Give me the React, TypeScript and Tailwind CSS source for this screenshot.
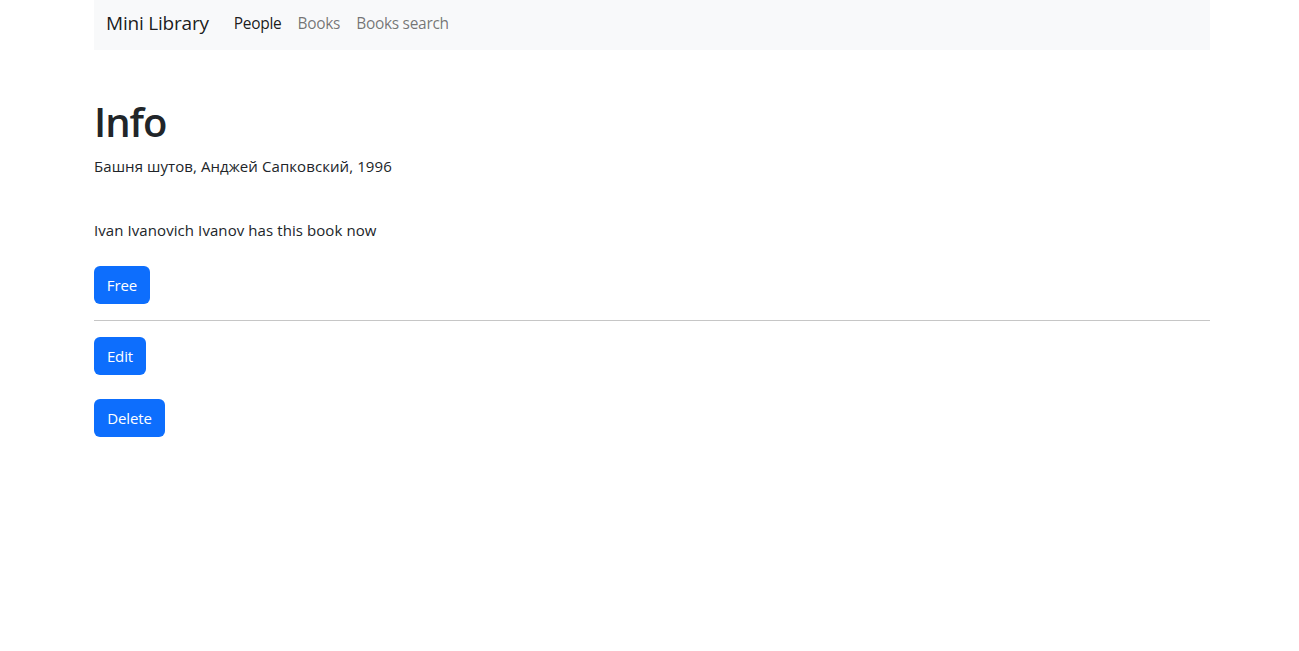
import React from "react";

export default function App() {
  return (
    <div className="min-h-[651px] bg-white text-[#212529] font-['Open_Sans',sans-serif] text-[16px] leading-[24px]">
      <div className="ml-[94px] w-[1116px]">
        <nav className="h-[50px] bg-[#f8f9fa] flex items-center px-[12px] pb-[5px]">
          <span className="text-[19px] leading-[30px] text-black/90 mr-[17px] whitespace-nowrap tracking-[-0.2px]">Mini Library</span>
          <a className="px-[8px] text-[15.5px] text-black/90 whitespace-nowrap tracking-[-0.3px]">People</a>
          <a className="px-[8px] text-[15.5px] text-black/55 whitespace-nowrap tracking-[-0.3px]">Books</a>
          <a className="px-[8px] text-[15.5px] text-black/55 whitespace-nowrap tracking-[-0.3px]">Books search</a>
        </nav>
        <main className="pt-[48px]">
          <h1 className="text-[40px] leading-[48px] font-semibold mb-[8px] tracking-[-1px]">Info</h1>
          <p className="text-[15px] tracking-[0.08px]">Башня шутов, Анджей Сапковский, 1996</p>
          <p className="mt-[40px] text-[15px] tracking-[0.08px]">Ivan Ivanovich Ivanov has this book now</p>
          <div className="mt-[24px] flex flex-col items-start">
            <button className="h-[38px] w-[56px] rounded-[6px] bg-[#0d6efd] text-white text-[15px] tracking-[-0.1px]">Free</button>
          </div>
          <hr className="my-[16px] border-0 border-t border-[#c6c6c6]" />
          <div className="flex flex-col items-start gap-[24px]">
            <button className="h-[38px] w-[52px] rounded-[6px] bg-[#0d6efd] text-white text-[15px] tracking-[-0.1px]">Edit</button>
            <button className="h-[38px] w-[71px] rounded-[6px] bg-[#0d6efd] text-white text-[15px] tracking-[-0.1px]">Delete</button>
          </div>
        </main>
      </div>
    </div>
  );
}
